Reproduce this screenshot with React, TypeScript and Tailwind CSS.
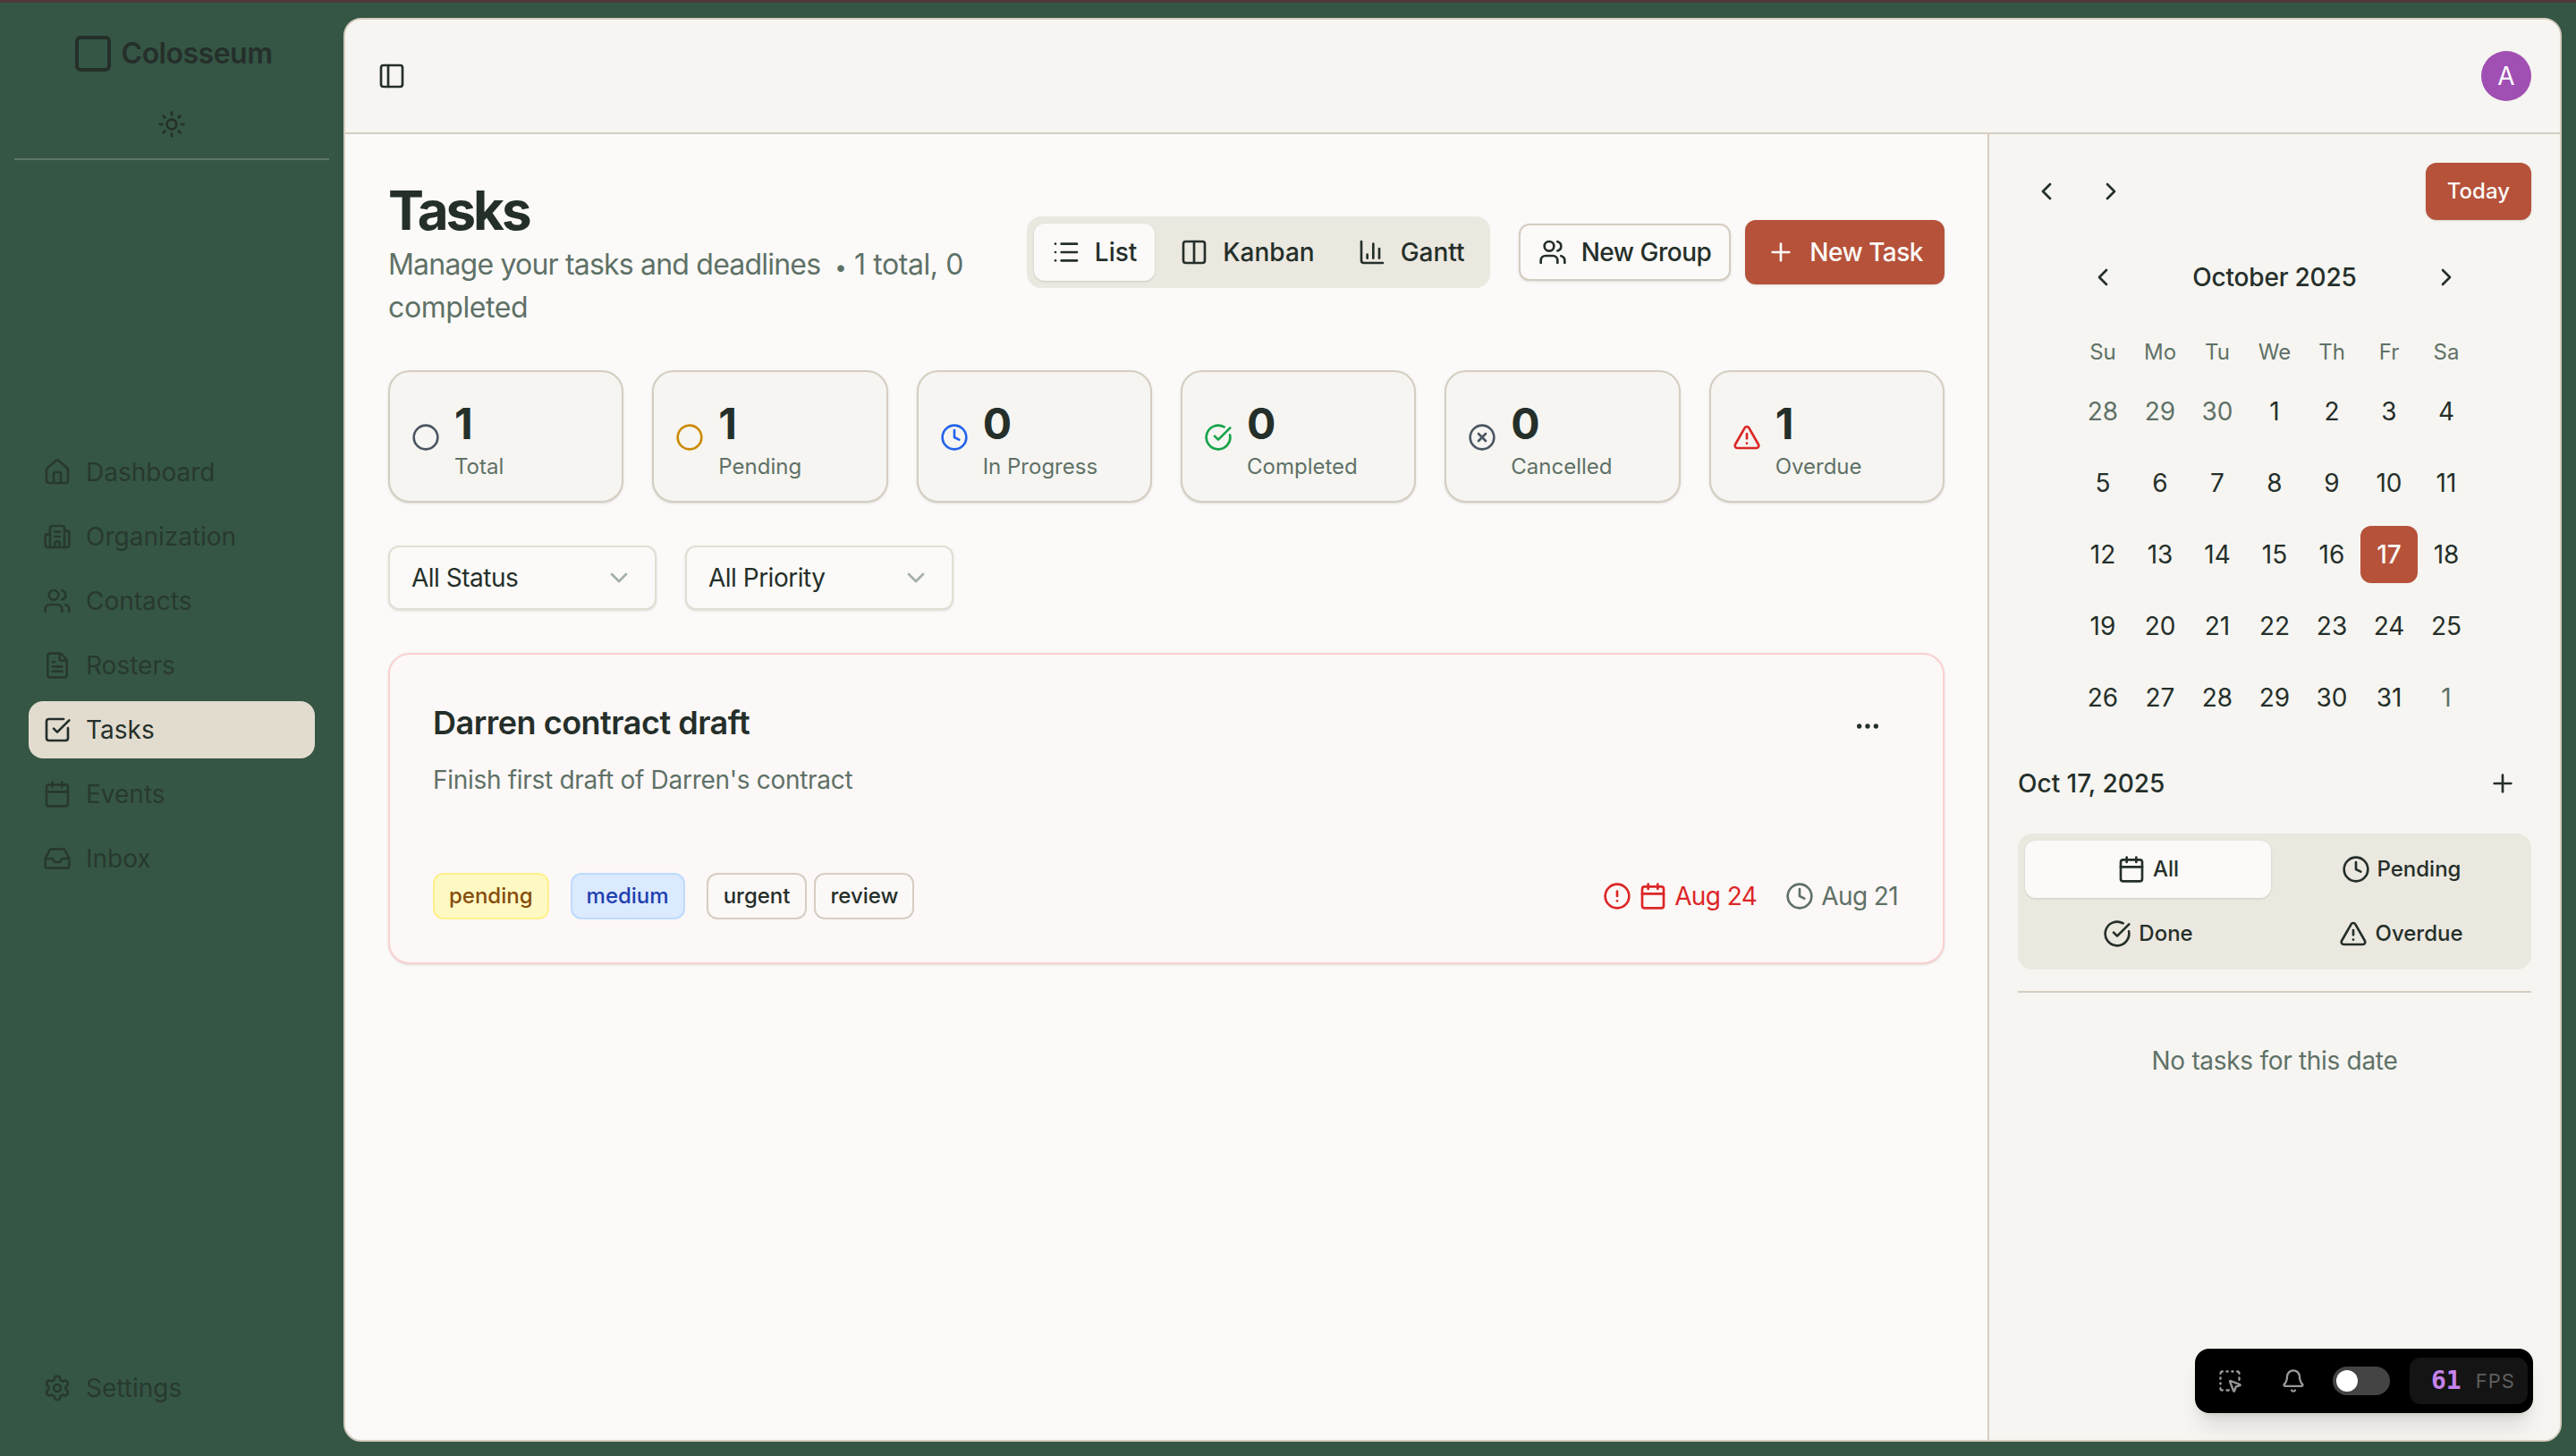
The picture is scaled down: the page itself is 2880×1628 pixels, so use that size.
import {
  AlertCircle,
  AlertTriangle,
  Bell,
  Building2,
  Calendar,
  CheckCircle,
  CheckSquare,
  ChevronDown,
  ChevronLeft,
  ChevronRight,
  Circle,
  CircleCheckBig,
  Clock,
  Columns2,
  ChartColumn,
  Ellipsis,
  FileText,
  House,
  Inbox,
  List,
  PanelLeft,
  Plus,
  Settings,
  Square,
  SquareDashedMousePointer,
  Sun,
  Users,
  XCircle,
} from 'lucide-react';

const navItems = [
  { label: 'Dashboard', icon: House },
  { label: 'Organization', icon: Building2 },
  { label: 'Contacts', icon: Users },
  { label: 'Rosters', icon: FileText },
  { label: 'Tasks', icon: CheckSquare, active: true },
  { label: 'Events', icon: Calendar },
  { label: 'Inbox', icon: Inbox },
];

const stats = [
  { value: 1, label: 'Total', icon: Circle, color: 'text-[#4b5563]' },
  { value: 1, label: 'Pending', icon: Circle, color: 'text-[#ca8a04]' },
  { value: 0, label: 'In Progress', icon: Clock, color: 'text-[#2563eb]' },
  { value: 0, label: 'Completed', icon: CircleCheckBig, color: 'text-[#16a34a]' },
  { value: 0, label: 'Cancelled', icon: XCircle, color: 'text-[#4b5563]' },
  { value: 1, label: 'Overdue', icon: AlertTriangle, color: 'text-[#dc2626]' },
];

const weekdays = ['Su', 'Mo', 'Tu', 'We', 'Th', 'Fr', 'Sa'];

const days = [
  { d: 28, muted: true }, { d: 29, muted: true }, { d: 30, muted: true },
  { d: 1 }, { d: 2 }, { d: 3 }, { d: 4 },
  { d: 5 }, { d: 6 }, { d: 7 }, { d: 8 }, { d: 9 }, { d: 10 }, { d: 11 },
  { d: 12 }, { d: 13 }, { d: 14 }, { d: 15 }, { d: 16 }, { d: 17, selected: true }, { d: 18 },
  { d: 19 }, { d: 20 }, { d: 21 }, { d: 22 }, { d: 23 }, { d: 24 }, { d: 25 },
  { d: 26 }, { d: 27 }, { d: 28 }, { d: 29 }, { d: 30 }, { d: 31 }, { d: 1, muted: true },
];

const dayTabs = [
  { label: 'All', icon: Calendar, active: true },
  { label: 'Pending', icon: Clock },
  { label: 'Done', icon: CheckCircle },
  { label: 'Overdue', icon: AlertTriangle },
];

function NavLink({ label, icon: Icon, active }: { label: string; icon: typeof House; active?: boolean }) {
  return (
    <a
      className={`flex h-16 items-center gap-4 rounded-2xl px-4 text-[28px] ${
        active ? 'bg-[#e2dccf] text-[#252f2a]' : 'text-[#28392f]'
      }`}
    >
      <Icon className="size-8 shrink-0" />
      {label}
    </a>
  );
}

function Sidebar() {
  return (
    <aside className="flex w-[384px] shrink-0 flex-col pb-[44px]">
      <div className="flex h-[112px] flex-col items-center pt-[33px]">
        <div className="flex items-center gap-2 text-[#252f2a]">
          <Square className="size-12 shrink-0" strokeWidth={2} />
          <span className="text-[32px] font-semibold leading-10 tracking-[-0.5px]">Colosseum</span>
        </div>
      </div>
      <div className="flex justify-center pb-[22px] pt-[8px] text-[#252f2a]">
        <Sun className="size-8" strokeWidth={2} />
      </div>
      <div className="mx-4 h-[2px] bg-[#5a7567]" />
      <nav className="mt-[317px] flex flex-col gap-2 px-8">
        {navItems.map((item) => (
          <NavLink key={item.label} {...item} />
        ))}
      </nav>
      <div className="mt-auto px-8">
        <NavLink label="Settings" icon={Settings} />
      </div>
    </aside>
  );
}

function ViewSwitcher() {
  return (
    <div className="flex h-20 items-center gap-2 rounded-2xl bg-[#ebe8e0] p-2 text-[28px] font-medium text-[#252f2a]">
      <button className="flex h-16 items-center gap-4 rounded-xl bg-[#fbfaf8] px-5 shadow-sm">
        <List className="size-8" />
        List
      </button>
      <button className="flex h-16 items-center gap-4 rounded-xl px-5">
        <Columns2 className="size-8" />
        Kanban
      </button>
      <button className="flex h-16 items-center gap-4 rounded-xl px-5">
        <ChartColumn className="size-8" />
        Gantt
      </button>
    </div>
  );
}

function StatCard({ value, label, icon: Icon, color }: (typeof stats)[number]) {
  return (
    <div className="flex h-[148px] items-center gap-4 rounded-3xl border-2 border-[#d6cdc1] bg-[#f6f5f1] px-6 shadow-sm">
      <Icon className={`mt-[2px] size-8 shrink-0 ${color}`} />
      <div className="pt-[4px]">
        <div className="text-[48px] font-bold leading-[64px] text-[#252f2a]">{value}</div>
        <div className="text-[24px] leading-8 text-[#5f7167]">{label}</div>
      </div>
    </div>
  );
}

function FilterSelect({ label }: { label: string }) {
  return (
    <button className="flex h-[72px] w-[300px] items-center justify-between rounded-xl border-2 border-[#e3ded4] bg-[#fbfaf8] px-6 text-[28px] tracking-[-0.5px] text-[#252f2a] shadow-sm">
      {label}
      <ChevronDown className="size-8 text-[#a3afa8]" />
    </button>
  );
}

function TaskCard() {
  return (
    <div className="rounded-3xl border-2 border-[#fbd0d0] bg-[#fcf8f7] p-12 shadow-sm">
      <div className="flex items-start justify-between">
        <h3 className="text-[36px] font-semibold leading-14 tracking-[-0.5px] text-[#252f2a]">
          Darren contract draft
        </h3>
        <button className="mr-[20px] mt-[16px] text-[#252f2a]">
          <Ellipsis className="size-8" />
        </button>
      </div>
      <p className="mt-[14px] text-[28px] leading-11 tracking-[-0.3px] text-[#5f7167]">
        Finish first draft of Darren's contract
      </p>
      <div className="mt-[82px] flex items-center justify-between">
        <div className="flex items-center gap-6 text-[24px] font-medium">
          <span className="flex h-[52px] items-center rounded-xl border-2 border-[#fef08a] bg-[#fef9c3] px-4 text-[#854d0e]">
            pending
          </span>
          <span className="flex h-[52px] items-center rounded-xl border-2 border-[#bfdbfe] bg-[#dbeafe] px-4 text-[#1e40af]">
            medium
          </span>
          <div className="flex gap-2 text-[#252f2a]">
            <span className="flex h-[52px] items-center rounded-xl border-2 border-[#d6cdc1] px-[17px]">urgent</span>
            <span className="flex h-[52px] items-center rounded-xl border-2 border-[#d6cdc1] px-4">review</span>
          </div>
        </div>
        <div className="mr-[2px] flex items-center gap-8 text-[28px] tracking-[-0.6px]">
          <div className="flex items-center gap-2 text-[#dc2626]">
            <AlertCircle className="size-8" />
            <Calendar className="size-8" />
            <span>Aug 24</span>
          </div>
          <div className="flex items-center gap-2 text-[#5f7167]">
            <Clock className="size-8" />
            <span>Aug 21</span>
          </div>
        </div>
      </div>
    </div>
  );
}

function CalendarPanel() {
  return (
    <aside className="flex w-[640px] shrink-0 flex-col border-l-2 border-[#d6cdc1] bg-[#f6f5f1] p-8 text-[#252f2a]">
      <div className="flex items-center justify-between">
        <div className="flex gap-2">
          <button className="flex size-16 items-center justify-center">
            <ChevronLeft className="size-8" />
          </button>
          <button className="flex size-16 items-center justify-center">
            <ChevronRight className="size-8" />
          </button>
        </div>
        <button className="h-16 rounded-xl bg-[#b6523a] px-6 text-[24px] font-medium text-[#fbfaf8] shadow-sm">
          Today
        </button>
      </div>

      <div className="mx-auto mt-8 w-[448px]">
        <div className="flex h-16 items-center justify-between">
          <button className="flex size-16 items-center justify-center">
            <ChevronLeft className="size-8" />
          </button>
          <span className="text-[28px] font-medium tracking-[-0.2px]">October 2025</span>
          <button className="flex size-16 items-center justify-center">
            <ChevronRight className="size-8" />
          </button>
        </div>
        <div className="mt-9 grid grid-cols-7 text-center text-[24px] leading-8 text-[#5f7167]">
          {weekdays.map((w) => (
            <span key={w}>{w}</span>
          ))}
        </div>
        <div className="mt-[18px] grid grid-cols-7 gap-y-4">
          {days.map((day, i) => (
            <div
              key={i}
              className={`flex h-16 items-center justify-center rounded-xl text-[28px] ${
                day.selected ? 'bg-[#b6523a] font-medium text-[#fbfaf8]' : day.muted ? 'text-[#5f7167]' : ''
              }`}
            >
              {day.d}
            </div>
          ))}
        </div>
      </div>

      <div className="mt-8 flex h-16 items-center justify-between">
        <span className="text-[28px] font-medium">Oct 17, 2025</span>
        <button className="flex size-16 items-center justify-center">
          <Plus className="size-8" />
        </button>
      </div>

      <div className="mt-6 grid grid-cols-2 gap-2 rounded-2xl bg-[#ebe8e0] p-2 text-[24px] font-medium">
        {dayTabs.map(({ label, icon: Icon, active }) => (
          <button
            key={label}
            className={`flex h-16 items-center justify-center gap-2 rounded-xl ${
              active ? 'bg-[#fbfaf8] shadow-sm' : ''
            }`}
          >
            <Icon className="size-8" />
            {label}
          </button>
        ))}
      </div>

      <div className="mt-6 h-[2px] bg-[#d6cdc1]" />
      <p className="mt-[56px] text-center text-[28px] leading-10 tracking-[-0.3px] text-[#5f7167]">
        No tasks for this date
      </p>
    </aside>
  );
}

function DevToolbar() {
  return (
    <div className="absolute bottom-[30px] right-[30px] flex h-[72px] w-[378px] items-center rounded-[16px] bg-black shadow-xl">
      <SquareDashedMousePointer className="ml-[25px] size-7 text-[#999999]" />
      <Bell className="ml-[43px] size-7 text-[#999999]" />
      <div className="ml-[30px] flex h-8 w-16 items-center rounded-full bg-[#444444] px-1">
        <div className="size-6 rounded-full bg-white" />
      </div>
      <div className="ml-[22px] flex h-[52px] w-[132px] items-center gap-4 rounded-xl bg-[#141414] pl-6">
        <span className="font-['DejaVu_Sans_Mono',monospace] text-[28px] font-bold text-[#c583ea]">61</span>
        <span className="text-[22px] tracking-[1px] text-[#5f5f5f]">FPS</span>
      </div>
    </div>
  );
}

export default function App() {
  return (
    <div className="flex h-screen w-full flex-col overflow-hidden bg-[#355645] font-['Inter',sans-serif]">
      <div className="h-[3px] shrink-0 bg-[#4f383c]" />
      <div className="flex min-h-0 flex-1">
        <Sidebar />
        <div className="relative mb-4 mr-4 mt-[17px] flex min-w-0 flex-1 flex-col overflow-hidden rounded-[20px] border-2 border-[#d6cdc1] bg-[#fbfaf8]">
          <header className="flex h-[128px] shrink-0 items-center justify-between border-b-2 border-[#d6cdc1] bg-[#f6f5f1] pl-[36px] pr-[32px]">
            <PanelLeft className="size-8 text-[#252f2a]" />
            <div className="flex size-14 items-center justify-center rounded-full bg-[#a04fb3] text-[28px] text-white">
              A
            </div>
          </header>
          <div className="flex min-h-0 flex-1">
            <main className="flex min-w-0 flex-1 flex-col gap-12 p-12">
              <div className="flex items-center gap-8">
                <div className="h-[168px] min-w-0 flex-1">
                  <h1 className="text-[60px] font-bold leading-[74px] tracking-[-3px] text-[#252f2a]">Tasks</h1>
                  <p className="text-[32px] leading-12 tracking-[-0.8px] text-[#5f7167]">
                    Manage your tasks and deadlines
                    <span className="ml-4 tracking-[-0.4px]">
                      <span className="text-[24px] leading-none">•</span> 1 total, 0 completed
                    </span>
                  </p>
                </div>
                <div className="flex shrink-0 items-center gap-8">
                  <ViewSwitcher />
                  <div className="flex items-center gap-4">
                    <button className="flex h-16 items-center gap-4 rounded-xl border-2 border-[#d6cdc1] bg-[#fbfaf8] px-5 text-[28px] font-medium tracking-[-0.5px] text-[#252f2a] shadow-sm">
                      <Users className="size-8" />
                      New Group
                    </button>
                    <button className="flex h-[72px] items-center gap-4 rounded-xl bg-[#b6523a] px-6 text-[28px] font-medium tracking-[-0.5px] text-[#fbfaf8] shadow-sm">
                      <Plus className="size-8" />
                      New Task
                    </button>
                  </div>
                </div>
              </div>

              <div className="grid grid-cols-6 gap-8">
                {stats.map((s) => (
                  <StatCard key={s.label} {...s} />
                ))}
              </div>

              <div className="flex gap-8">
                <FilterSelect label="All Status" />
                <FilterSelect label="All Priority" />
              </div>

              <TaskCard />
            </main>
            <CalendarPanel />
          </div>
          <DevToolbar />
        </div>
      </div>
    </div>
  );
}
